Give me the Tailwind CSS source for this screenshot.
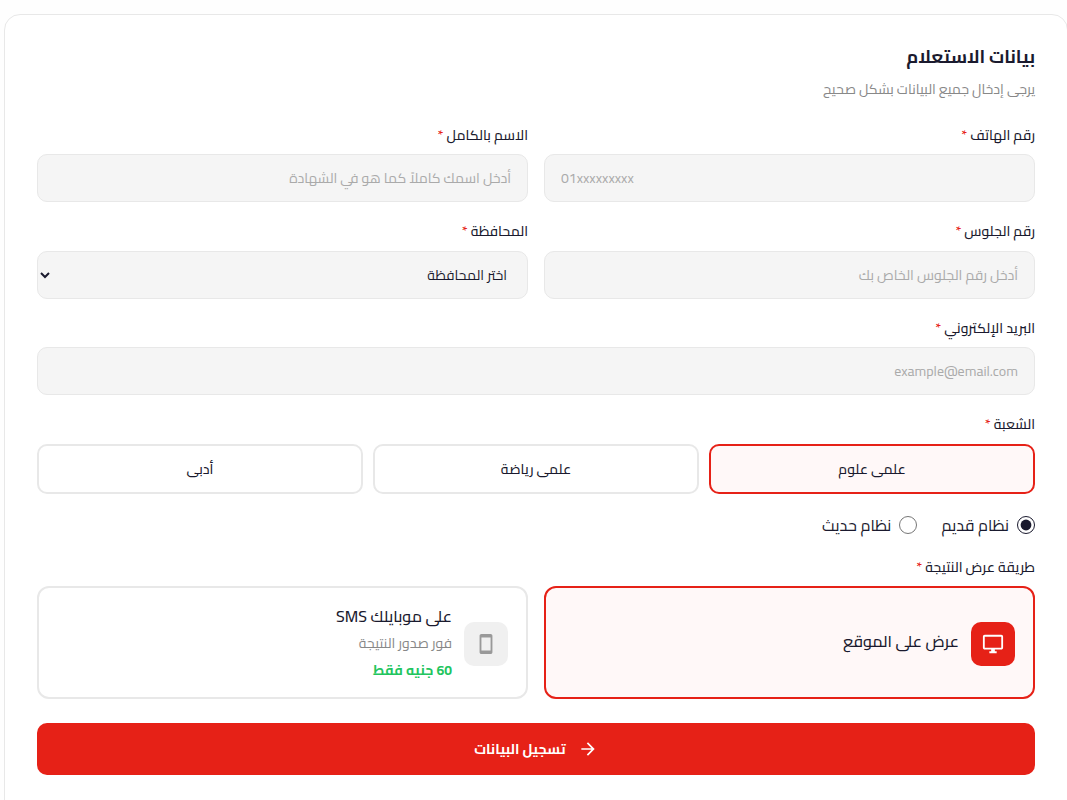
<!DOCTYPE html>
<html lang="ar" dir="rtl">
<head>
  <meta charset="UTF-8">
  <meta name="viewport" content="width=device-width, initial-scale=1.0">
  <title>بيانات الاستعلام</title>
  <script src="https://cdn.jsdelivr.net/npm/@tailwindcss/browser@4"></script>
  <style>
    body {
      font-family: 'Cairo', 'Noto Sans Arabic', 'Open Sans', 'DejaVu Sans', sans-serif;
    }
  </style>
</head>
<body class="bg-[#fefefe] text-[#1a1a2e] overflow-x-hidden">

  <main class="mt-3.5 ml-1 -mr-px bg-white border border-[#e8e8e8] rounded-2xl p-8 pb-10">
    <header class="mb-[25px]">
      <h1 class="text-lg leading-5 font-bold">بيانات الاستعلام</h1>
      <p class="mt-3 text-sm leading-[21px] text-[#888888]">يرجى إدخال جميع البيانات بشكل صحيح</p>
    </header>

    <form>
      <div class="grid grid-cols-2 gap-x-4 gap-y-5">
        <div>
          <label for="phone" class="block mb-2 text-sm leading-[21px] font-medium">رقم الهاتف <span class="text-[#e62117]">*</span></label>
          <input id="phone" type="tel" dir="ltr" placeholder="01xxxxxxxxx" class="block w-full h-12 px-4 text-sm text-left bg-[#f5f5f5] border border-[#e8e8e8] rounded-[10px] placeholder:text-[#aaaaaa]">
        </div>
        <div>
          <label for="name" class="block mb-2 text-sm leading-[21px] font-medium">الاسم بالكامل <span class="text-[#e62117]">*</span></label>
          <input id="name" type="text" placeholder="أدخل اسمك كاملاً كما هو في الشهادة" class="block w-full h-12 px-4 text-sm bg-[#f5f5f5] border border-[#e8e8e8] rounded-[10px] placeholder:text-[#aaaaaa]">
        </div>
        <div>
          <label for="seat" class="block mb-2.5 text-sm leading-[19px] font-medium">رقم الجلوس <span class="text-[#e62117]">*</span></label>
          <input id="seat" type="text" placeholder="أدخل رقم الجلوس الخاص بك" class="block w-full h-12 px-4 text-sm bg-[#f5f5f5] border border-[#e8e8e8] rounded-[10px] placeholder:text-[#aaaaaa]">
        </div>
        <div>
          <label for="gov" class="block mb-2.5 text-sm leading-[19px] font-medium">المحافظة <span class="text-[#e62117]">*</span></label>
          <select id="gov" class="block w-full h-12 pr-4 text-sm bg-[#f5f5f5] border border-[#e8e8e8] rounded-[10px]">
            <option>اختر المحافظة</option>
            <option>القاهرة</option>
            <option>الجيزة</option>
          </select>
        </div>
        <div class="col-span-2">
          <label for="email" class="block mb-[9px] text-sm leading-[19px] font-medium">البريد الإلكتروني <span class="text-[#e62117]">*</span></label>
          <input id="email" type="email" placeholder="example@email.com" class="block w-full h-12 px-4 text-sm bg-[#f5f5f5] border border-[#e8e8e8] rounded-[10px] placeholder:text-[#aaaaaa]">
        </div>
      </div>

      <div class="mt-5" role="group" aria-labelledby="branch-label">
        <div id="branch-label" class="mb-2.5 text-sm leading-[19px] font-medium">الشعبة <span class="text-[#e62117]">*</span></div>
        <div class="grid grid-cols-3 gap-2.5">
          <button type="button" class="h-[50px] text-sm font-medium bg-[#fff8f8] border-2 border-[#e62117] rounded-[10px]">علمى علوم</button>
          <button type="button" class="h-[50px] text-sm font-medium bg-white border-2 border-[#e8e8e8] rounded-[10px]">علمى رياضة</button>
          <button type="button" class="h-[50px] text-sm font-medium bg-white border-2 border-[#e8e8e8] rounded-[10px]">أدبى</button>
        </div>
      </div>

      <div class="flex gap-6 mt-[19px]">
        <label class="flex items-center gap-2 text-base leading-6"><input type="radio" name="system" checked class="size-[18px] accent-[#1a1a2e]">نظام قديم</label>
        <label class="flex items-center gap-2 text-base leading-6"><input type="radio" name="system" class="size-[18px] accent-[#1a1a2e]">نظام حديث</label>
      </div>

      <div class="mt-5" role="group" aria-labelledby="method-label">
        <div id="method-label" class="mb-[9px] text-sm leading-5 font-medium">طريقة عرض النتيجة <span class="text-[#e62117]">*</span></div>
        <div class="grid grid-cols-2 gap-4">
          <button type="button" class="flex items-center gap-3 px-[18px] pt-[15px] pb-[13px] text-right bg-[#fff8f8] border-2 border-[#e62117] rounded-xl">
            <span class="flex items-center justify-center size-11 shrink-0 rounded-[10px] bg-[#e62117] text-white">
              <svg class="size-[22px]" viewBox="0 0 24 24" fill="currentColor"><path d="M21 2H3c-1.100 0-2 .9-2 2v12c0 1.100.9 2 2 2h7v2H8v2h8v-2h-2v-2h7c1.100 0 2-.9 2-2V4c0-1.100-.9-2-2-2zm0 14H3V4h18v12z"/></svg>
            </span>
            <span class="pb-1 text-base leading-[27px] font-medium">عرض على الموقع</span>
          </button>
          <button type="button" class="flex items-center gap-3 px-[18px] pt-[15px] pb-[13px] text-right bg-white border-2 border-[#e8e8e8] rounded-xl">
            <span class="flex items-center justify-center size-11 shrink-0 rounded-[10px] bg-[#f0f0f0] text-[#999999]">
              <svg class="size-[22px]" viewBox="0 0 24 24" fill="currentColor"><path d="M17 1H7c-1.100 0-2 .9-2 2v18c0 1.100.9 2 2 2h10c1.100 0 2-.9 2-2V3c0-1.100-.9-2-2-2zm0 18H7V5h10v14z"/></svg>
            </span>
            <span>
              <span class="block text-base leading-[27px] font-medium">على موبايلك SMS</span>
              <span class="block text-sm leading-[27px] text-[#888888]">فور صدور النتيجة</span>
              <span class="block text-sm leading-[27px] font-bold text-[#22c55e]">60 جنيه فقط</span>
            </span>
          </button>
        </div>
      </div>

      <button type="submit" class="flex items-center justify-center gap-3 w-full h-[52px] mt-6 text-sm font-bold text-white bg-[#e62117] rounded-[10px]">
        <svg class="size-5" viewBox="0 0 24 24" fill="currentColor"><path d="M12 4l-1.410 1.410L16.170 11H4v2h12.170l-5.580 5.590L12 20l8-8z"/></svg>
        تسجيل البيانات
      </button>
    </form>
  </main>

</body>
</html>
